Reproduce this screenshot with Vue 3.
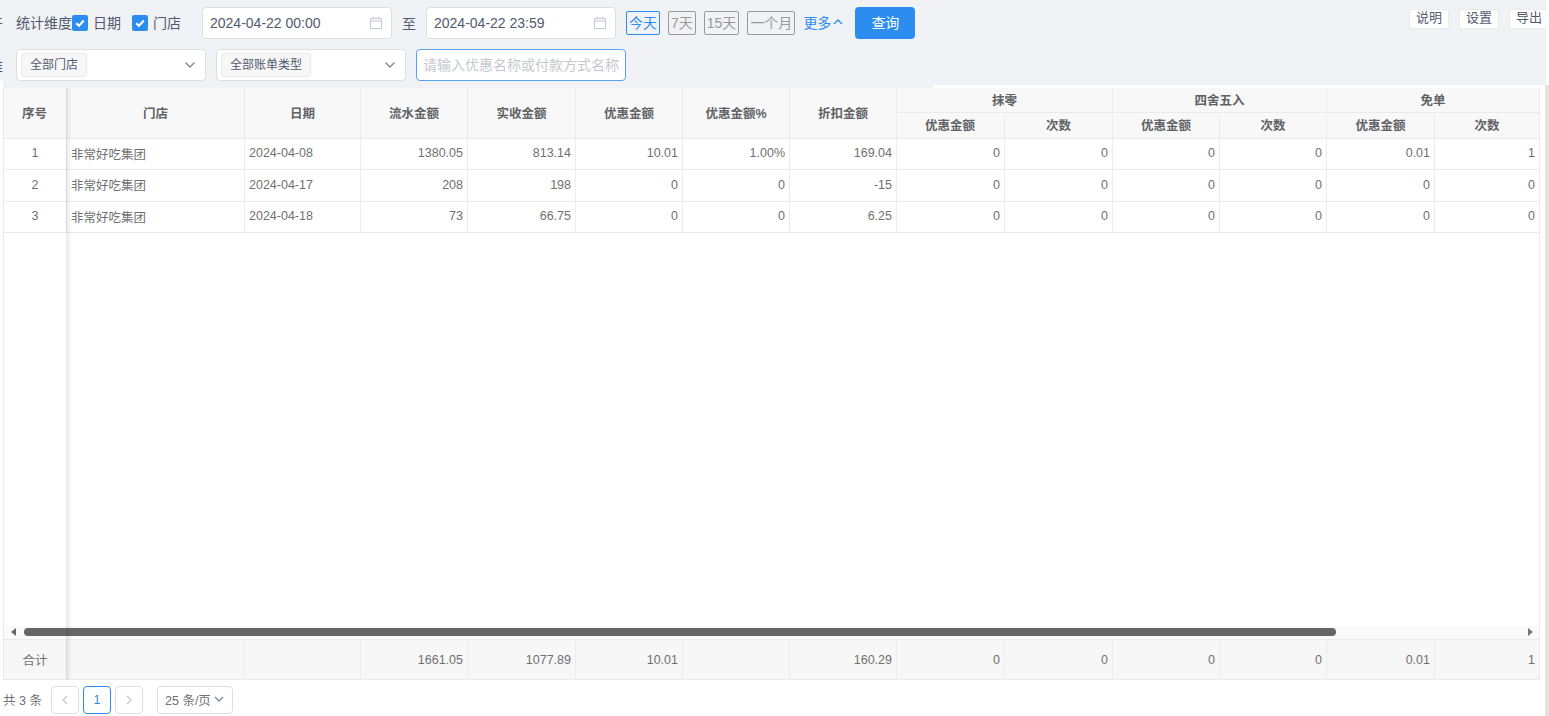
<template>
    <div class="page">
        <div class="toolbar">
            <div class="row first">
                <span class="cut-label">干</span>
                <span class="label">统计维度</span>
                <label class="check" v-for="c in dimensions" :key="c">
                    <span class="check-box">
                        <svg width="16" height="16" viewBox="0 0 16 16">
                            <path d="M4.2 8.2 L7 10.8 L11.8 5.6" fill="none" stroke="#fff" stroke-width="2.2" />
                        </svg>
                    </span>
                    <span class="check-text">{{ c }}</span>
                </label>
                <div class="date-input" v-for="(d, i) in dates" :key="d" :class="{ second: i === 1 }">
                    <span>{{ d }}</span>
                    <svg width="14" height="14" viewBox="0 0 14 14" fill="none" stroke="#c5c8d8" stroke-width="1">
                        <path d="M1.5 2.5 H12.5 V12.5 H1.5 Z M1.5 5 H12.5 M4 .5 V2.5 M10 .5 V2.5" />
                    </svg>
                </div>
                <span class="to">至</span>
                <button class="quick active">今天</button>
                <button class="quick">7天</button>
                <button class="quick">15天</button>
                <button class="quick">一个月</button>
                <span class="more">
                    更多
                    <svg width="10" height="8" viewBox="0 0 10 8" fill="none" stroke="#2d8cf0" stroke-width="1.4">
                        <path d="M1 6 L5 2 L9 6" />
                    </svg>
                </span>
                <button class="search">查询</button>
                <div class="actions">
                    <button>说明</button>
                    <button>设置</button>
                    <button>导出</button>
                </div>
            </div>
            <div class="row second-row">
                <span class="cut-label">维</span>
                <div class="select" v-for="s in selects" :key="s">
                    <span class="tag">{{ s }}</span>
                    <svg width="12" height="8" viewBox="0 0 12 8" fill="none" stroke="#808695" stroke-width="1.3">
                        <path d="M1.5 1.5 L6 6 L10.5 1.5" />
                    </svg>
                </div>
                <div class="keyword">请输入优惠名称或付款方式名称</div>
            </div>
        </div>
        <div class="grey-tail"></div>
        <div class="white-edge"></div>
        <div class="pink-edge"></div>

        <div class="table-box">
            <table>
                <colgroup>
                    <col v-for="(w, i) in widths" :key="i" :style="{ width: w + 'px' }" />
                </colgroup>
                <thead>
                    <tr class="head-one">
                        <th v-for="h in plainHeads" :key="h" rowspan="2">{{ h }}</th>
                        <th v-for="g in groups" :key="g" colspan="2">{{ g }}</th>
                    </tr>
                    <tr class="head-two">
                        <template v-for="g in groups" :key="g">
                            <th>优惠金额</th>
                            <th>次数</th>
                        </template>
                    </tr>
                </thead>
                <tbody>
                    <tr v-for="(r, i) in rows" :key="i" :class="'row-' + i">
                        <td class="center">{{ i + 1 }}</td>
                        <td>非常好吃集团</td>
                        <td>{{ r[0] }}</td>
                        <td v-for="(v, j) in r.slice(1)" :key="j" class="num">{{ v }}</td>
                    </tr>
                </tbody>
            </table>
            <div class="blank"></div>
            <div class="scrollbar">
                <span class="arrow left"></span>
                <div class="track"><div class="thumb"></div></div>
                <span class="arrow right"></span>
            </div>
            <table class="foot">
                <colgroup>
                    <col v-for="(w, i) in widths" :key="i" :style="{ width: w + 'px' }" />
                </colgroup>
                <tbody>
                    <tr>
                        <td class="center">合计</td>
                        <td></td>
                        <td></td>
                        <td v-for="(v, j) in totals" :key="j" class="num">{{ v }}</td>
                    </tr>
                </tbody>
            </table>
            <div class="fixed-shadow"></div>
        </div>

        <div class="pager">
            <span class="total">共 3 条</span>
            <button class="page-btn">
                <svg width="8" height="10" viewBox="0 0 8 10" fill="none" stroke="#c5c8ce" stroke-width="1.2">
                    <path d="M6 1 L2 5 L6 9" />
                </svg>
            </button>
            <button class="page-btn current">1</button>
            <button class="page-btn">
                <svg width="8" height="10" viewBox="0 0 8 10" fill="none" stroke="#c5c8ce" stroke-width="1.2">
                    <path d="M2 1 L6 5 L2 9" />
                </svg>
            </button>
            <div class="page-size">
                25 条/页
                <svg width="10" height="7" viewBox="0 0 10 7" fill="none" stroke="#808695" stroke-width="1.3">
                    <path d="M1 1 L5 5 L9 1" />
                </svg>
            </div>
        </div>
    </div>
</template>

<script setup>
const dimensions = ["日期", "门店"];
const dates = ["2024-04-22 00:00", "2024-04-22 23:59"];
const selects = ["全部门店", "全部账单类型"];
const widths = [63, 178, 116, 107, 108, 107, 107, 107, 108, 108, 107, 107, 108, 104];
const plainHeads = ["序号", "门店", "日期", "流水金额", "实收金额", "优惠金额", "优惠金额%", "折扣金额"];
const groups = ["抹零", "四舍五入", "免单"];
const rows = [
    ["2024-04-08", "1380.05", "813.14", "10.01", "1.00%", "169.04", 0, 0, 0, 0, "0.01", 1],
    ["2024-04-17", "208", "198", 0, 0, "-15", 0, 0, 0, 0, 0, 0],
    ["2024-04-18", "73", "66.75", 0, 0, "6.25", 0, 0, 0, 0, 0, 0],
];
const totals = ["1661.05", "1077.89", "10.01", "", "160.29", 0, 0, 0, 0, "0.01", 1];
</script>

<style>
html,
body {
    margin: 0;
    background: #fff;
    overflow: hidden;
}
</style>

<style scoped>
.page {
    position: relative;
    width: 1549px;
    height: 716px;
    overflow: hidden;
    font-family: "Liberation Sans", "Noto Sans CJK SC", sans-serif;
    color: #515a6e;
    background: #fff;
}

button {
    font-family: inherit;
    cursor: pointer;
}

.toolbar {
    box-sizing: border-box;
    width: 1546px;
    height: 85px;
    padding-top: 7px;
    background: #f0f2f5;
    overflow: hidden;
}

.row {
    display: flex;
    align-items: center;
    height: 32px;
    font-size: 14px;
}

.second-row {
    margin-top: 10px;
}

.cut-label {
    width: 3px;
    margin-right: 13px;
    overflow: hidden;
    direction: rtl;
    flex-shrink: 0;
}

.label,
.check-text {
    padding-bottom: 2px;
}

.check {
    display: flex;
    align-items: center;
    gap: 5px;
    margin-right: 11px;
}

.check-box {
    display: block;
    width: 16px;
    height: 16px;
    border-radius: 2px;
    background: #2d8cf0;
}

.check-box svg {
    display: block;
}

.check:last-of-type {
    margin-right: 21px;
}

.date-input {
    box-sizing: border-box;
    display: flex;
    align-items: center;
    justify-content: space-between;
    width: 190px;
    height: 32px;
    padding: 0 8px 0 7px;
    border: 1px solid #dcdee2;
    border-radius: 4px;
    background: #fff;
    color: #515a6e;
}

.date-input.second {
    order: 1;
    margin-right: 10px;
}

.to {
    margin: 0 10px;
}

.quick {
    order: 2;
    height: 24px;
    padding: 0 2px 2px;
    margin-right: 8px;
    border: 1px solid #999;
    border-radius: 2px;
    background: transparent;
    color: #999;
    font-size: 14px;
}

.quick.active {
    border-color: #2d8cf0;
    color: #2d8cf0;
}

.more {
    order: 3;
    display: flex;
    align-items: center;
    gap: 2px;
    margin-right: 12px;
    padding-bottom: 2px;
    color: #2d8cf0;
}

.search {
    order: 4;
    width: 60px;
    height: 32px;
    padding: 0 0 2px;
    border: none;
    border-radius: 4px;
    background: #2d8cf0;
    color: #fff;
    font-size: 14px;
}

.actions {
    order: 5;
    display: flex;
    gap: 10px;
    align-self: flex-start;
    margin: 2px -3px 0 auto;
}

.actions button {
    box-sizing: border-box;
    width: 40px;
    height: 20px;
    padding: 0 0 2px;
    border: 1px solid #e8eaec;
    border-radius: 2px;
    background: #fff;
    color: #515a6e;
    font-size: 13px;
    line-height: 16px;
}

.select {
    box-sizing: border-box;
    display: flex;
    align-items: center;
    justify-content: space-between;
    width: 190px;
    height: 32px;
    margin-right: 10px;
    padding: 0 9px 0 4px;
    border: 1px solid #dcdee2;
    border-radius: 4px;
    background: #fff;
}

.tag {
    box-sizing: border-box;
    height: 24px;
    padding: 0 8px;
    border: 1px solid #e8eaec;
    border-radius: 3px;
    background: #f7f7f7;
    font-size: 12px;
    line-height: 22px;
}

.keyword {
    box-sizing: border-box;
    width: 210px;
    height: 32px;
    padding: 0 6px;
    border: 1px solid #57a3f3;
    border-radius: 4px;
    background: #fff;
    color: #c5c8ce;
    font-size: 14px;
    line-height: 30px;
    white-space: nowrap;
    overflow: hidden;
}

.grey-tail {
    position: absolute;
    left: 3px;
    top: 81px;
    width: 930px;
    height: 7px;
    background: #f0f2f5;
}

.white-edge {
    position: absolute;
    left: 0;
    top: 81px;
    width: 3px;
    height: 7px;
    background: #fff;
}

.pink-edge {
    position: absolute;
    right: 0;
    top: 85px;
    bottom: 0;
    width: 4px;
    background: #eee0dd;
}

.table-box {
    position: relative;
    box-sizing: border-box;
    display: flex;
    flex-direction: column;
    width: 1537px;
    height: 592px;
    margin: 3px 0 0 3px;
    border-left: 1px solid #e8eaec;
    border-right: 1px solid #e8eaec;
    background: #fff;
}

table {
    width: 1535px;
    border-collapse: separate;
    border-spacing: 0;
    table-layout: fixed;
    font-size: 12.5px;
}

th {
    box-sizing: border-box;
    padding: 0 0 2px;
    border-right: 1px solid #ececee;
    border-bottom: 1px solid #e8eaec;
    background: #f8f8f9;
    color: #606266;
    font-weight: 700;
    text-align: center;
}

th:first-child {
    padding-right: 1px;
}

.head-one {
    height: 25px;
}

.head-two {
    height: 26px;
}

td {
    box-sizing: border-box;
    padding: 0 4px 2px;
    border-right: 1px solid #ececee;
    border-bottom: 1px solid #e8eaec;
    color: #707070;
    white-space: nowrap;
}

th:last-child,
td:last-child {
    border-right: none;
}

.row-0,
.row-2 {
    height: 31px;
}

.row-1 {
    height: 32px;
}

.center {
    text-align: center;
}

.num {
    text-align: right;
}

.blank {
    flex: 1;
}

.scrollbar {
    display: flex;
    align-items: center;
    height: 13px;
    padding-bottom: 2px;
    box-sizing: border-box;
    background: #fafafa;
}

.arrow {
    width: 0;
    height: 0;
    border-top: 4px solid transparent;
    border-bottom: 4px solid transparent;
}

.arrow.left {
    margin-left: 7px;
    border-right: 5px solid #666;
}

.arrow.right {
    margin-right: 6px;
    border-left: 5px solid #777;
}

.track {
    flex: 1;
    margin: 0 8px;
}

.thumb {
    width: 1312px;
    height: 8px;
    border-radius: 4px;
    background: #666;
}

.foot {
    border-top: 1px solid #e8eaec;
}

.foot td {
    height: 40px;
    padding-bottom: 0;
    background: #f7f7f7;
}

.fixed-shadow {
    position: absolute;
    left: 62px;
    top: 0;
    bottom: 0;
    width: 6px;
    background: linear-gradient(90deg, rgba(0, 0, 0, 0.09), rgba(0, 0, 0, 0));
    pointer-events: none;
}

.pager {
    display: flex;
    align-items: center;
    height: 36px;
    padding: 3px 0 0 3px;
    box-sizing: border-box;
    font-size: 12.5px;
}

.total {
    width: 48px;
    color: #707070;
}

.page-btn {
    box-sizing: border-box;
    display: flex;
    align-items: center;
    justify-content: center;
    width: 28px;
    height: 28px;
    margin-right: 4px;
    padding: 0;
    border: 1px solid #dcdee2;
    border-radius: 4px;
    background: #fff;
    font-size: 12.5px;
    color: #2d8cf0;
}

.page-btn.current {
    border-color: #2d8cf0;
}

.page-size {
    box-sizing: border-box;
    display: flex;
    align-items: center;
    gap: 3px;
    width: 76px;
    height: 28px;
    margin-left: 10px;
    padding-left: 7px;
    border: 1px solid #dcdee2;
    border-radius: 4px;
    color: #707070;
}
</style>
